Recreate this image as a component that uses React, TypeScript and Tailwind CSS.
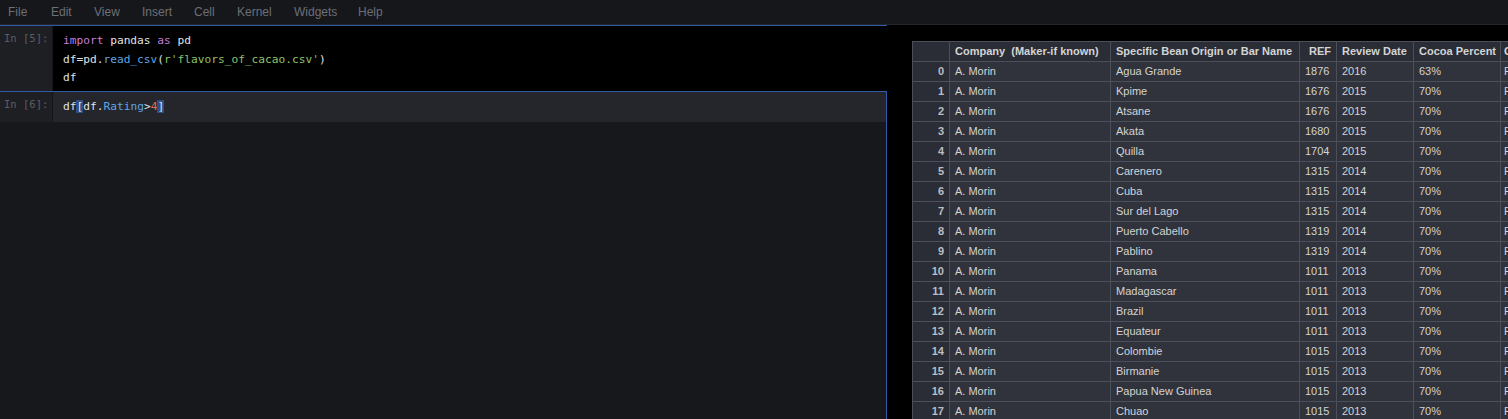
import React from 'react';

const menu = ['File', 'Edit', 'View', 'Insert', 'Cell', 'Kernel', 'Widgets', 'Help'];
const menuX = ['w-[43px]', 'w-[43px]', 'w-[48px]', 'w-[52px]', 'w-[43px]', 'w-[57px]', 'w-[64px]', 'w-[40px]'];

const rows: [string, string, string, string][] = [
  ['Agua Grande', '1876', '2016', '63%'],
  ['Kpime', '1676', '2015', '70%'],
  ['Atsane', '1676', '2015', '70%'],
  ['Akata', '1680', '2015', '70%'],
  ['Quilla', '1704', '2015', '70%'],
  ['Carenero', '1315', '2014', '70%'],
  ['Cuba', '1315', '2014', '70%'],
  ['Sur del Lago', '1315', '2014', '70%'],
  ['Puerto Cabello', '1319', '2014', '70%'],
  ['Pablino', '1319', '2014', '70%'],
  ['Panama', '1011', '2013', '70%'],
  ['Madagascar', '1011', '2013', '70%'],
  ['Brazil', '1011', '2013', '70%'],
  ['Equateur', '1011', '2013', '70%'],
  ['Colombie', '1015', '2013', '70%'],
  ['Birmanie', '1015', '2013', '70%'],
  ['Papua New Guinea', '1015', '2013', '70%'],
  ['Chuao', '1015', '2013', '70%'],
];

const mono = { fontFamily: '"DejaVu Sans Mono", "Liberation Mono", monospace' };
const cell = 'border border-[#4a4f59] h-[20px] px-[5px] py-0 whitespace-nowrap overflow-hidden';
const lastCell = 'border border-[#4a4f59] h-[20px] pl-[3px] pr-[5px] py-0 whitespace-nowrap overflow-hidden';

// Jupyter cell prompt
function Prompt({ n }: { n: number }) {
  return (
    <div className="w-[53px] shrink-0 bg-[#1e1f23] border-r border-[#141518] pl-[4px] pt-[5px] text-[10.5px] text-[#5b5e64]" style={mono}>
      In [{n}]:
    </div>
  );
}

export default function App() {
  return (
    <div className="w-[1508px] h-[419px] overflow-hidden bg-black flex flex-col" style={{ fontFamily: '"Liberation Sans", Arial, sans-serif' }}>
      {/* Menu bar */}
      <div className="h-[25px] shrink-0 bg-[#16171b] border-b border-[#24252a] flex items-center pl-[8px] text-[12px] text-[#6c6f76]">
        {menu.map((m, i) => (
          <span key={m} className={menuX[i]}>{m}</span>
        ))}
      </div>

      <div className="flex flex-1 min-h-0">
        {/* Notebook */}
        <div className="w-[887px] shrink-0 flex flex-col">
          <div className="flex h-[66px] border-t border-[#2f5ba8]">
            <Prompt n={5} />
            <div className="flex-1 bg-black pl-[10px] pt-[6px] text-[11.2px] leading-[18.6px] text-[#e2e2e2]" style={mono}>
              <div><span className="text-[#c77ddb]">import</span> pandas <span className="text-[#c77ddb]">as</span> pd</div>
              <div>df=pd.<span className="text-[#5ea5e6]">read_csv</span>(<span className="text-[#8fc268]">r'flavors_of_cacao.csv'</span>)</div>
              <div>df</div>
            </div>
          </div>
          <div className="flex-1 flex flex-col border-t border-r border-[#2f5ba8] bg-[#17181c]">
            <div className="flex h-[30px]">
              <Prompt n={6} />
              <div className="flex-1 bg-[#25262b] pl-[10px] pt-[7px] text-[11.2px] text-[#e2e2e2]" style={mono}>
                df<span className="bg-[#2d4f86]">[</span>df.<span className="text-[#5ea5e6]">Rating</span>&gt;<span className="text-[#e0705a]">4</span><span className="bg-[#2d4f86]">]</span>
              </div>
            </div>
          </div>
        </div>

        {/* Output table */}
        <div className="flex-1 min-w-0 pl-[25px] pt-[16px] overflow-hidden">
          <table className="w-[708px] border-collapse text-[11px] text-[#d4d4d4]" style={{ fontFamily: '"Liberation Sans", Arial, sans-serif', tableLayout: 'fixed' }}>
            <colgroup>
              <col className="w-[37px]" />
              <col className="w-[161px]" />
              <col className="w-[189px]" />
              <col className="w-[37px]" />
              <col className="w-[77px]" />
              <col className="w-[87px]" />
              <col className="w-[120px]" />
            </colgroup>
            <thead>
              <tr className="bg-[#2a2d35] font-bold">
                <th className={cell}></th>
                <th className={`${cell} text-left`}>Company &nbsp;(Maker-if known)</th>
                <th className={`${cell} text-left`}>Specific Bean Origin or Bar Name</th>
                <th className={`${cell} text-right`}>REF</th>
                <th className={`${cell} text-left`}>Review Date</th>
                <th className={`${cell} text-left`}>Cocoa Percent</th>
                <th className={`${lastCell} text-left`}>Company Location</th>
              </tr>
            </thead>
            <tbody>
              {rows.map((r, i) => (
                <tr key={i} className="bg-[#30333b]">
                  <th className={`${cell} bg-[#2a2d35] text-right font-bold text-[#b9bdc5]`}>{i}</th>
                  <td className={cell}>A. Morin</td>
                  <td className={cell}>{r[0]}</td>
                  <td className={cell}>{r[1]}</td>
                  <td className={cell}>{r[2]}</td>
                  <td className={cell}>{r[3]}</td>
                  <td className={lastCell}>France</td>
                </tr>
              ))}
            </tbody>
          </table>
        </div>
      </div>
    </div>
  );
}
